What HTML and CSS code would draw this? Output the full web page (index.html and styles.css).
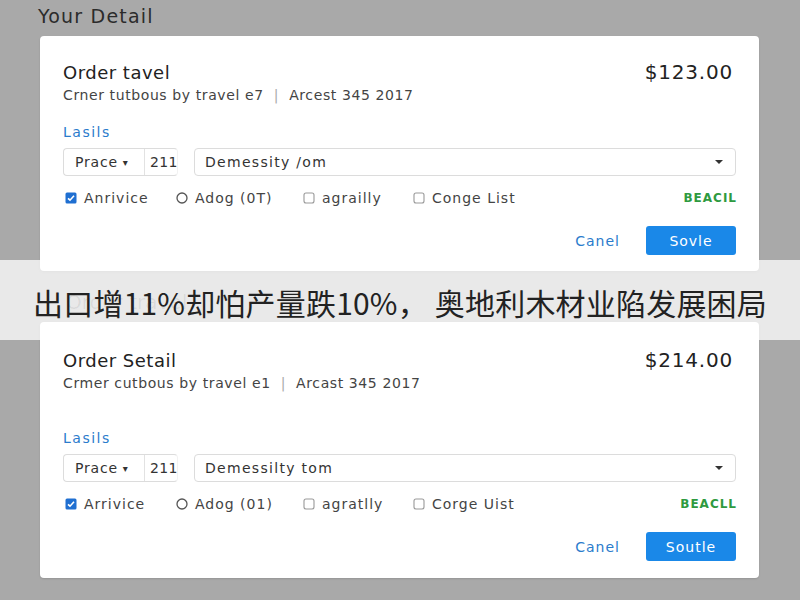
FILE: index.html
```html
<!DOCTYPE html>
<html lang="en">
<head>
<meta charset="utf-8">
<title>Your Detail</title>
<link rel="stylesheet" href="styles.css">
</head>
<body>
<div class="page">
  <h1 class="page-title">Your Detail</h1>

  <section class="card card-first">
    <div class="card-head">
      <span class="card-title">Order tavel</span>
      <span class="price">$123.00</span>
    </div>
    <div class="subtitle">Crner tutbous by travel e7 <span class="sep">|</span> Arcest 345 2017</div>
    <div class="section-label">Lasils</div>
    <div class="inputs">
      <div class="group">
        <span class="seg seg-drop">Prace <span class="mini-caret">▾</span></span>
        <span class="seg seg-num">211</span>
      </div>
      <div class="select"><span>Demessity /om</span><span class="caret"></span></div>
    </div>
    <div class="checks">
      <label class="check c1"><svg class="ico" viewBox="0 0 12 12"><rect x="0.5" y="0.5" width="11" height="11" rx="1.5" fill="#1f6fd1"/><path d="M3 6.3 L5 8.2 L9 3.8" stroke="#fff" stroke-width="1.6" fill="none"/></svg>Anrivice</label>
      <label class="check c2"><svg class="ico" viewBox="0 0 12 12"><circle cx="6" cy="6" r="5" fill="none" stroke="#555" stroke-width="1.3"/></svg>Adog (0T)</label>
      <label class="check c3"><svg class="ico" viewBox="0 0 12 12"><rect x="1" y="1" width="10" height="10" rx="2" fill="none" stroke="#999" stroke-width="1.1"/></svg>agrailly</label>
      <label class="check c4"><svg class="ico" viewBox="0 0 12 12"><rect x="1" y="1" width="10" height="10" rx="2" fill="none" stroke="#999" stroke-width="1.1"/></svg>Conge List</label>
      <span class="tag">BEACIL</span>
    </div>
    <div class="actions">
      <button class="btn-link">Canel</button>
      <button class="btn-primary">Sovle</button>
    </div>
  </section>

  <section class="card card-second">
    <div class="card-head">
      <span class="card-title">Order Setail</span>
      <span class="price">$214.00</span>
    </div>
    <div class="subtitle">Crmer cutbous by travel e1 <span class="sep">|</span> Arcast 345 2017</div>
    <div class="section-label">Lasils</div>
    <div class="inputs">
      <div class="group">
        <span class="seg seg-drop">Prace <span class="mini-caret">▾</span></span>
        <span class="seg seg-num">211</span>
      </div>
      <div class="select"><span>Demessilty tom</span><span class="caret"></span></div>
    </div>
    <div class="checks">
      <label class="check c1"><svg class="ico" viewBox="0 0 12 12"><rect x="0.5" y="0.5" width="11" height="11" rx="1.5" fill="#1f6fd1"/><path d="M3 6.3 L5 8.2 L9 3.8" stroke="#fff" stroke-width="1.6" fill="none"/></svg>Arrivice</label>
      <label class="check c2"><svg class="ico" viewBox="0 0 12 12"><circle cx="6" cy="6" r="5" fill="none" stroke="#555" stroke-width="1.3"/></svg>Adog (01)</label>
      <label class="check c3"><svg class="ico" viewBox="0 0 12 12"><rect x="1" y="1" width="10" height="10" rx="2" fill="none" stroke="#999" stroke-width="1.1"/></svg>agratlly</label>
      <label class="check c4"><svg class="ico" viewBox="0 0 12 12"><rect x="1" y="1" width="10" height="10" rx="2" fill="none" stroke="#999" stroke-width="1.1"/></svg>Corge Uist</label>
      <span class="tag">BEACLL</span>
    </div>
    <div class="actions">
      <button class="btn-link">Canel</button>
      <button class="btn-primary">Soutle</button>
    </div>
  </section>
</div>

<div class="band">
  <span class="ghost">Order travel</span>
  <span class="band-text">出口增11%却怕产量跌10%， 奥地利木材业陷发展困局</span>
</div>
</body>
</html>
```

FILE: styles.css
```css
* { box-sizing: border-box; }
html, body {
  margin: 0;
  padding: 0;
  width: 800px;
  height: 600px;
  overflow: hidden;
}
body {
  background: #a9a9a9;
  font-family: "DejaVu Sans", "Liberation Sans", sans-serif;
  color: #333;
  position: relative;
}
.page {
  padding: 4px 0 0 40px;
  width: 759px;
}
.page-title {
  margin: 0 0 8px -2px;
  font-size: 19px;
  line-height: 24px;
  font-weight: normal;
  letter-spacing: 1.2px;
  color: #2b2b2b;
}
.card {
  background: #fff;
  border-radius: 4px;
  padding: 24px 23px 16px;
  box-shadow: 0 1px 2px rgba(0,0,0,0.12);
}
.card-second {
  margin-top: 51px;
  padding-top: 26px;
  padding-bottom: 17px;
}
.card-head {
  display: flex;
  justify-content: space-between;
  align-items: center;
  height: 24px;
}
.card-title {
  font-size: 18px;
  letter-spacing: 0.5px;
  color: #222;
}
.price {
  font-size: 20px;
  letter-spacing: 0.8px;
  color: #222;
  margin-right: 3px;
}
.subtitle {
  margin-top: 2px;
  font-size: 14px;
  line-height: 18px;
  letter-spacing: 0.6px;
  color: #444;
}
.sep {
  color: #aaa;
  margin: 0 5px;
}
.section-label {
  margin-top: 19px;
  font-size: 14px;
  line-height: 18px;
  letter-spacing: 1.5px;
  color: #2b7ccc;
}
.card-second .section-label { margin-top: 37px; }
.inputs {
  margin-top: 7px;
  display: flex;
  gap: 16px;
  height: 28px;
}
.group {
  display: flex;
  width: 115px;
  border: 1px solid #dcdcdc;
  border-right-color: #f2f2f2;
  border-radius: 4px;
  overflow: hidden;
}
.seg {
  display: flex;
  align-items: center;
  font-size: 14px;
  letter-spacing: 0.8px;
  color: #333;
  white-space: nowrap;
}
.seg-drop {
  width: 81px;
  flex: none;
  padding-left: 11px;
  border-right: 1px solid #e2e2e2;
}
.mini-caret {
  font-size: 10px;
  margin-left: 5px;
}
.seg-num {
  padding-left: 5px;
  letter-spacing: 0.4px;
}
.select {
  flex: 1;
  display: flex;
  align-items: center;
  justify-content: space-between;
  border: 1px solid #dcdcdc;
  border-radius: 4px;
  padding: 0 12px 0 10px;
  font-size: 14px;
  letter-spacing: 1.3px;
  color: #333;
}
.caret {
  width: 0;
  height: 0;
  border-left: 4px solid transparent;
  border-right: 4px solid transparent;
  border-top: 4px solid #333;
}
.checks {
  margin-top: 13px;
  display: flex;
  align-items: center;
  height: 18px;
  padding-left: 2px;
  font-size: 14px;
  letter-spacing: 1px;
  color: #444;
}
.check {
  display: flex;
  align-items: center;
  gap: 7px;
  white-space: nowrap;
}
.c1 { width: 111px; }
.c2 { width: 127px; }
.c3 { width: 110px; }
.ico {
  width: 12px;
  height: 12px;
  flex: none;
}
.tag {
  margin-left: auto;
  margin-right: -1px;
  font-size: 12px;
  font-weight: bold;
  letter-spacing: 1px;
  color: #2e9a40;
}
.actions {
  margin-top: 19px;
  display: flex;
  justify-content: flex-end;
  align-items: center;
  height: 29px;
}
.btn-link {
  border: 0;
  background: none;
  font-family: inherit;
  font-size: 14px;
  letter-spacing: 1px;
  color: #2b7ccc;
  padding: 0;
  margin-right: 26px;
}
.btn-primary {
  width: 90px;
  height: 29px;
  border: 0;
  border-radius: 3px;
  background: #1a88e8;
  color: #fff;
  font-family: inherit;
  font-size: 14px;
  letter-spacing: 1px;
  font-weight: normal;
}
.band {
  position: absolute;
  left: 0;
  right: 0;
  top: 260px;
  height: 80px;
  background: rgba(255,255,255,0.74);
  display: flex;
  align-items: center;
  justify-content: center;
}
.ghost {
  position: absolute;
  left: 66px;
  top: 30px;
  font-size: 20px;
  color: rgba(0,0,0,0.07);
}
.band-text {
  position: relative;
  font-family: "Noto Sans CJK SC", sans-serif;
  font-size: 30px;
  letter-spacing: 0.2px;
  color: #222;
  margin-top: 4px;
}
```
